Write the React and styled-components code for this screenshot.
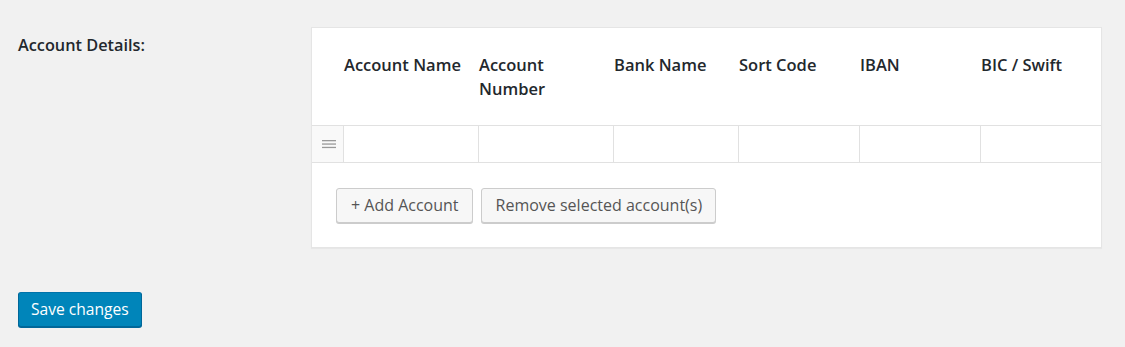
import React from "react";
import styled, { createGlobalStyle } from "styled-components";

const Global = createGlobalStyle`
  html, body { margin: 0; padding: 0; background: #f1f1f1; }
  body { font-family: "Open Sans", "Noto Sans", sans-serif; color: #23282d; }
  * { box-sizing: border-box; }
`;

const Page = styled.div`
  padding: 27px 0 0 0;
  width: 1125px;
  height: 347px;
`;

const FieldRow = styled.div`
  display: grid;
  grid-template-columns: 311px 791px;
`;

const Label = styled.div`
  padding: 6px 0 0 18px;
  font-size: 16.3px;
  font-weight: 600;
  line-height: 24px;
`;

const Box = styled.div`
  background: #fff;
  border: 1px solid #e5e5e5;
  box-shadow: 0 1px 1px rgba(0, 0, 0, 0.04);
`;

const cols = "31px 135px 135px 125px 121px 121px 121px";

const HeadRow = styled.div`
  display: grid;
  grid-template-columns: ${cols};
  padding: 25px 0 24px;
`;

const Th = styled.div`
  padding-left: 1px;
  padding-right: 10px;
  font-size: 16.5px;
  font-weight: 600;
  line-height: 24px;
  color: #23282d;
`;

const BodyRow = styled.div`
  display: grid;
  grid-template-columns: ${cols};
  border-top: 1px solid #e1e1e1;
  border-bottom: 1px solid #e1e1e1;
  height: 38px;
`;

const Handle = styled.div`
  background: #f9f9f9;
  display: flex;
  align-items: center;
  justify-content: center;
  padding-left: 2px;
`;

const Cell = styled.input`
  border: 0;
  border-left: 1px solid #e1e1e1;
  margin: 0;
  padding: 0 8px;
  width: 100%;
  height: 100%;
  font: inherit;
  background: #fff;
  outline: none;
`;

const Footer = styled.div`
  display: flex;
  gap: 8px;
  padding: 25px 24px 24px;
`;

const Button = styled.button`
  height: 35px;
  padding: 0 13px 0 14px;
  font-family: "Open Sans", "Noto Sans", sans-serif;
  font-size: 16px;
  color: #555;
  background: #f7f7f7;
  border: 1px solid #ccc;
  border-radius: 3px;
  box-shadow: 0 1px 0 #ccc;
  line-height: 33px;
  cursor: pointer;
`;

const Primary = styled(Button)`
  background: #0085ba;
  border-color: #0073aa #006799 #006799;
  box-shadow: 0 1px 0 #006799;
  color: #fff;
  height: 35px;
  padding: 0 12px;
  font-size: 15.6px;
`;

const Actions = styled.div`
  padding: 44px 0 0 18px;
`;

const HandleIcon = () => (
  <svg width="14" height="9" viewBox="0 0 14 9">
    <g fill="#999">
      <rect x="0" y="0" width="14" height="1.3" />
      <rect x="0" y="3.4" width="14" height="1.3" />
      <rect x="0" y="6.8" width="14" height="1.3" />
    </g>
  </svg>
);

const headers = ["Account Name", "Account Number", "Bank Name", "Sort Code", "IBAN", "BIC / Swift"];

export default function App() {
  return (
    <>
      <Global />
      <Page>
        <FieldRow>
          <Label>Account Details:</Label>
          <Box>
            <HeadRow>
              <Th />
              {headers.map((h) => (
                <Th key={h}>{h}</Th>
              ))}
            </HeadRow>
            <BodyRow>
              <Handle>
                <HandleIcon />
              </Handle>
              {headers.map((h) => (
                <Cell key={h} type="text" />
              ))}
            </BodyRow>
            <Footer>
              <Button>+ Add Account</Button>
              <Button>Remove selected account(s)</Button>
            </Footer>
          </Box>
        </FieldRow>
        <Actions>
          <Primary>Save changes</Primary>
        </Actions>
      </Page>
    </>
  );
}
